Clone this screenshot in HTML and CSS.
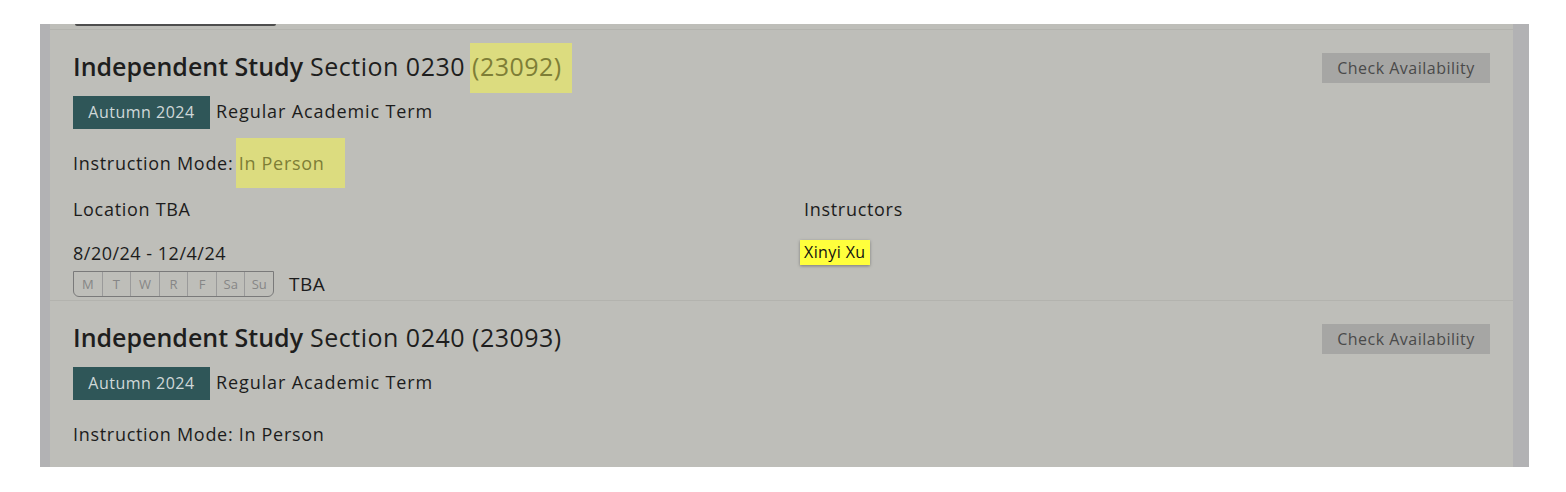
FILE: index.html
```html
<!DOCTYPE html>
<html>
<head>
<meta charset="utf-8">
<link rel="stylesheet" href="styles.css">
</head>
<body>
<div class="overlay">
  <div class="strip-left"></div>
  <div class="panel">
    <div class="prev"><div class="prev-btn"></div></div>

    <div class="card">
      <div class="head">
        <h2 class="title"><strong>Independent Study</strong> Section 0230 <span class="hl hl-title">(23092)</span></h2>
        <button class="check">Check Availability</button>
      </div>
      <div class="term"><span class="badge">Autumn 2024</span><span class="term-name">Regular Academic Term</span></div>
      <div class="mode">Instruction Mode: <span class="hl hl-mode">In Person</span></div>
      <div class="cols">
        <div class="col">
          <div class="label">Location TBA</div>
          <div class="dates">8/20/24 - 12/4/24</div>
          <div class="sched">
            <div class="days"><span>M</span><span>T</span><span>W</span><span>R</span><span>F</span><span>Sa</span><span>Su</span></div>
            <span class="time">TBA</span>
          </div>
        </div>
        <div class="col">
          <div class="label">Instructors</div>
          <div class="inst"><span class="name">Xinyi Xu</span></div>
        </div>
      </div>
    </div>

    <div class="card">
      <div class="head">
        <h2 class="title"><strong>Independent Study</strong> Section 0240 (23093)</h2>
        <button class="check">Check Availability</button>
      </div>
      <div class="term"><span class="badge">Autumn 2024</span><span class="term-name">Regular Academic Term</span></div>
      <div class="mode">Instruction Mode: In Person</div>
    </div>
  </div>
  <div class="strip-right"></div>
</div>
</body>
</html>
```

FILE: styles.css
```css
html, body {
  margin: 0;
  padding: 0;
  background: #ffffff;
}
body {
  font-family: "Open Sans", "Liberation Sans", sans-serif;
  color: #1c1c1c;
}
.overlay {
  display: flex;
  margin: 24px 0 0 40px;
  width: 1489px;
  height: 443px;
  overflow: hidden;
}
.strip-left {
  width: 10px;
  background: #b2b2b4;
}
.strip-right {
  width: 16px;
  background: #b2b2b4;
}
.panel {
  flex: 1;
  background: #bebeb9;
  overflow: hidden;
}
.prev {
  height: 5px;
  border-bottom: 1px solid #b3b3ae;
}
.prev-btn {
  margin-left: 25px;
  width: 201px;
  height: 2px;
  background: #4e4e4e;
  border-radius: 0 0 3px 3px;
}
.card {
  padding: 20px 23px 3px 23px;
  border-bottom: 1px solid #b3b3ae;
}
.card:last-child {
  border-bottom: none;
}
.head {
  display: flex;
  justify-content: space-between;
  align-items: flex-start;
}
.title {
  margin: 0;
  font-size: 25px;
  line-height: 32px;
  font-weight: 400;
  letter-spacing: 0.5px;
  color: #1e1e1e;
}
.title strong {
  font-weight: 600;
  letter-spacing: 0;
}
.hl {
  background: #dcdc7f;
  color: #7e7e36;
}
.hl-title {
  padding: 6px 10px 10px 2px;
  margin: 0 -10px 0 -2px;
}
.hl-mode {
  padding: 13px 20px 13px 3px;
  margin: 0 -20px 0 -3px;
}
.check {
  margin-top: 3px;
  width: 168px;
  height: 30px;
  border: none;
  background: #a6a6a4;
  color: #4a4a4a;
  font-family: inherit;
  font-size: 16px;
  letter-spacing: 0.5px;
  padding: 0;
}
.term {
  display: flex;
  align-items: center;
  margin-top: 13px;
  height: 33px;
}
.badge {
  display: flex;
  align-items: center;
  justify-content: center;
  width: 137px;
  height: 33px;
  background: #2f5658;
  color: #cfd8d8;
  font-size: 16px;
  letter-spacing: 0.5px;
  padding-bottom: 1px;
  box-sizing: border-box;
}
.term-name {
  margin-left: 6px;
  font-size: 18px;
  letter-spacing: 0.9px;
  padding-bottom: 3px;
}
.mode {
  margin-top: 22px;
  font-size: 18px;
  letter-spacing: 0.7px;
  line-height: 24px;
}
.cols {
  display: grid;
  grid-template-columns: 731px 1fr;
  margin-top: 22px;
}
.label {
  font-size: 18px;
  letter-spacing: 0.7px;
  line-height: 24px;
}
.dates {
  margin-top: 20px;
  font-size: 18px;
  letter-spacing: 0.5px;
  line-height: 24px;
}
.sched {
  display: flex;
  align-items: center;
  margin-top: 6px;
}
.days {
  display: flex;
  width: 201px;
  box-sizing: border-box;
  border: 1px solid #7a7a7a;
  border-radius: 0 0 6px 6px;
  height: 26px;
}
.days span {
  flex: 1;
  display: flex;
  align-items: center;
  justify-content: center;
  font-size: 13px;
  color: #868686;
  border-right: 1px solid #9a9a9a;
}
.days span:last-child {
  border-right: none;
}
.time {
  margin-left: 15px;
  font-size: 19px;
  letter-spacing: 0.5px;
}
.inst {
  margin-top: 19px;
  margin-left: -4px;
}
.name {
  display: inline-block;
  background: #ffff3c;
  padding: 0 4px;
  height: 25px;
  line-height: 25px;
  font-size: 16px;
  letter-spacing: 0.4px;
  color: #111;
  box-shadow: 0 1px 3px rgba(0,0,0,0.35);
}
```
